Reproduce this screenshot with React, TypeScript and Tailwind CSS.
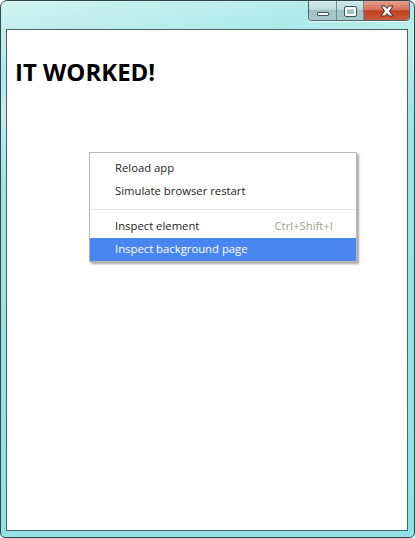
import React from "react";

function TitleButtons() {
  return (
    <div className="flex h-[20px] rounded-b-[4px] border border-t-0 border-[#4d676c] overflow-hidden shadow-[0_1px_0_rgba(255,255,255,0.7)]">
      <div className="w-[28px] h-full flex items-center justify-center bg-[linear-gradient(#d3e9eb,#bcd8db_45%,#9ebfc3_50%,#a9cbce)] border-r border-[#6f8b90]">
        <div className="w-[12px] h-[4px] mt-[6px] bg-white border border-[#3d5559] rounded-[1px]" />
      </div>
      <div className="w-[27px] h-full flex items-center justify-center bg-[linear-gradient(#d3e9eb,#bcd8db_45%,#9ebfc3_50%,#a9cbce)] border-r border-[#6f8b90]">
        <div className="w-[11px] h-[9px] border-[2px] border-white outline outline-1 outline-[#3d5559] rounded-[1px] mt-[1px]" />
      </div>
      <div className="w-[45px] h-full flex items-center justify-center bg-[linear-gradient(#e7a08f,#d6705a_45%,#c2421f_52%,#c95a3d)]">
        <svg width="16" height="12" viewBox="0 0 16 12">
          <path d="M2 1 L6 1 L8 3.5 L10 1 L14 1 L10.5 6 L14 11 L10 11 L8 8.5 L6 11 L2 11 L5.5 6 Z" fill="#ffffff" stroke="#4a2a22" strokeWidth="1" strokeLinejoin="round" />
        </svg>
      </div>
    </div>
  );
}

function MenuItem({ label, shortcut, active }: { label: string; shortcut?: string; active?: boolean }) {
  return (
    <div
      className={
        "h-[23px] flex items-center justify-between pl-[25px] pr-[23px] " +
        (active ? "bg-[#4a86f2] text-white" : "text-[#1e1e1e]")
      }
    >
      <span>{label}</span>
      {shortcut && <span className="text-[#a39c92]">{shortcut}</span>}
    </div>
  );
}

export default function App() {
  return (
    <div className="w-[415px] h-[538px] relative bg-white">
      <div className="w-[415px] h-[538px] rounded-t-[7px] rounded-b-[5px] border border-[#33474a] bg-[linear-gradient(170deg,#d2f3f2_0%,#aee9ea_12%,#c2efee_18%,#9fe4e6_30%,#92e1e4_100%)] flex flex-col">
        <div className="h-[28px] flex justify-end items-start pr-[4px] shrink-0">
          <TitleButtons />
        </div>
        <div className="flex-1 flex flex-col pl-[5px] pr-[6px] pb-[6px]">
          <div className="flex-1 bg-white border border-[#4a6064] relative">
            <div className="px-[8px] pt-[27px]">
              <h1 className="text-[24px] font-bold leading-[30px] text-black [font-family:'Open_Sans',sans-serif]">
                IT WORKED!
              </h1>
            </div>
          </div>
        </div>
      </div>

      <div className="absolute left-[89px] top-[152px] w-[268px] bg-white border border-[#b6b6b6] shadow-[2px_2px_2px_rgba(0,0,0,0.35)] pt-[4px] text-[11.3px] [font-family:'Open_Sans',sans-serif]">
        <MenuItem label="Reload app" />
        <MenuItem label="Simulate browser restart" />
        <div className="h-[12px] flex items-center">
          <div className="w-full h-px bg-[#e6e6e6]" />
        </div>
        <MenuItem label="Inspect element" shortcut="Ctrl+Shift+I" />
        <MenuItem label="Inspect background page" active />
      </div>
    </div>
  );
}
